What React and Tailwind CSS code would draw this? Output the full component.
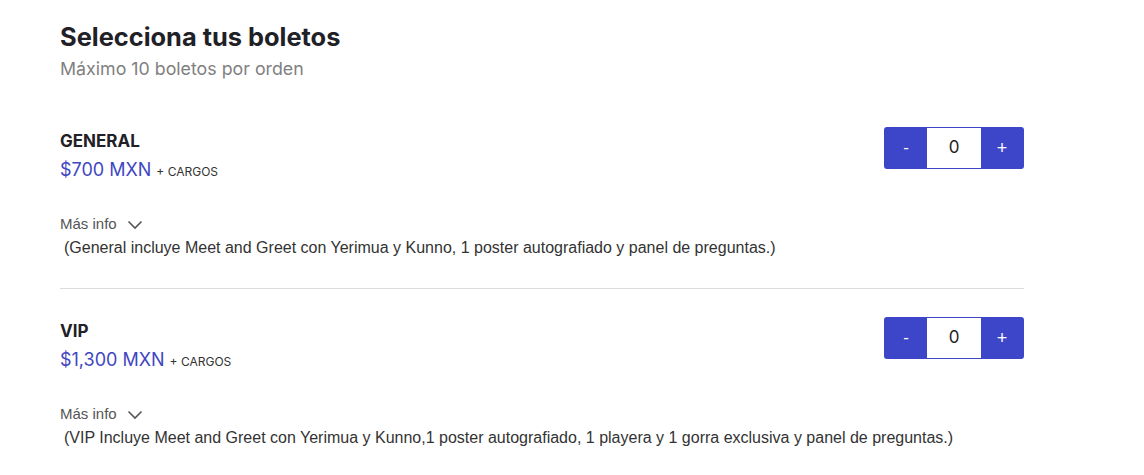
import React, { useState } from 'react';

const tickets = [
  {
    name: 'GENERAL',
    price: '$700 MXN',
    info: '(General incluye Meet and Greet con Yerimua y Kunno, 1 poster autografiado y panel de preguntas.)',
  },
  {
    name: 'VIP',
    price: '$1,300 MXN',
    info: '(VIP Incluye Meet and Greet con Yerimua y Kunno,1 poster autografiado, 1 playera y 1 gorra exclusiva y panel de preguntas.)',
  },
];

const Chevron = () => (
  <svg width="16" height="10" viewBox="0 0 16 10" fill="none" className="ml-2.5 mt-0.5">
    <path d="M1.5 1.5 L8 8 L14.5 1.5" stroke="#555" strokeWidth="1.6" />
  </svg>
);

const Counter = () => {
  const [qty, setQty] = useState(0);
  return (
    <div className="flex h-[42px] rounded-[3px] overflow-hidden bg-[#3d45c9] p-px shrink-0">
      <button
        onClick={() => setQty(Math.max(0, qty - 1))}
        className="w-[42px] flex items-center justify-center text-white text-[17px] font-['Liberation_Sans',sans-serif]"
      >
        -
      </button>
      <div className="w-[54px] bg-white flex items-center justify-center text-[17px] text-[#222] font-['Inter',sans-serif]">
        {qty}
      </div>
      <button
        onClick={() => setQty(Math.min(10, qty + 1))}
        className="w-[42px] flex items-center justify-center text-white text-[18px] font-['Liberation_Sans',sans-serif]"
      >
        +
      </button>
    </div>
  );
};

export default function App() {
  return (
    <div className="w-[1144px] h-[475px] bg-white overflow-hidden font-['Inter',sans-serif]">
      <div className="ml-[60px] w-[964px] pt-[21px]">
        <h1 className="text-[25.4px] leading-[32px] font-bold text-[#1f2127]">Selecciona tus boletos</h1>
        <p className="text-[17.8px] leading-[22px] text-[#808080] mt-[5px]">Máximo 10 boletos por orden</p>

        {tickets.map((t, i) => (
          <div key={t.name} className={i > 0 ? 'border-t border-[#dcdcdc] pt-[29px]' : 'pt-[48px]'}>
            <div className="flex justify-between items-start">
              <div className="pt-[2px]">
                <h3 className="text-[17px] leading-[22px] font-bold text-[#1f2127]">{t.name}</h3>
                <div className="flex items-baseline mt-[7px]">
                  <span className="text-[18px] leading-[22px] text-[#3f46c2]">{t.price}</span>
                  <span className="text-[12px] text-[#333] ml-[5px]">+ CARGOS</span>
                </div>
              </div>
              <div className="mt-[-1px]">
                <Counter />
              </div>
            </div>
            <div className="flex items-center mt-[33px] text-[15px] leading-[20px] text-[#555] font-['Liberation_Sans',sans-serif]">
              Más info <Chevron />
            </div>
            <p className="text-[16px] leading-[20px] text-[#333] font-['Liberation_Sans',sans-serif] mt-[4px] ml-[4px] pb-[30px]">
              {t.info}
            </p>
          </div>
        ))}
      </div>
    </div>
  );
}
